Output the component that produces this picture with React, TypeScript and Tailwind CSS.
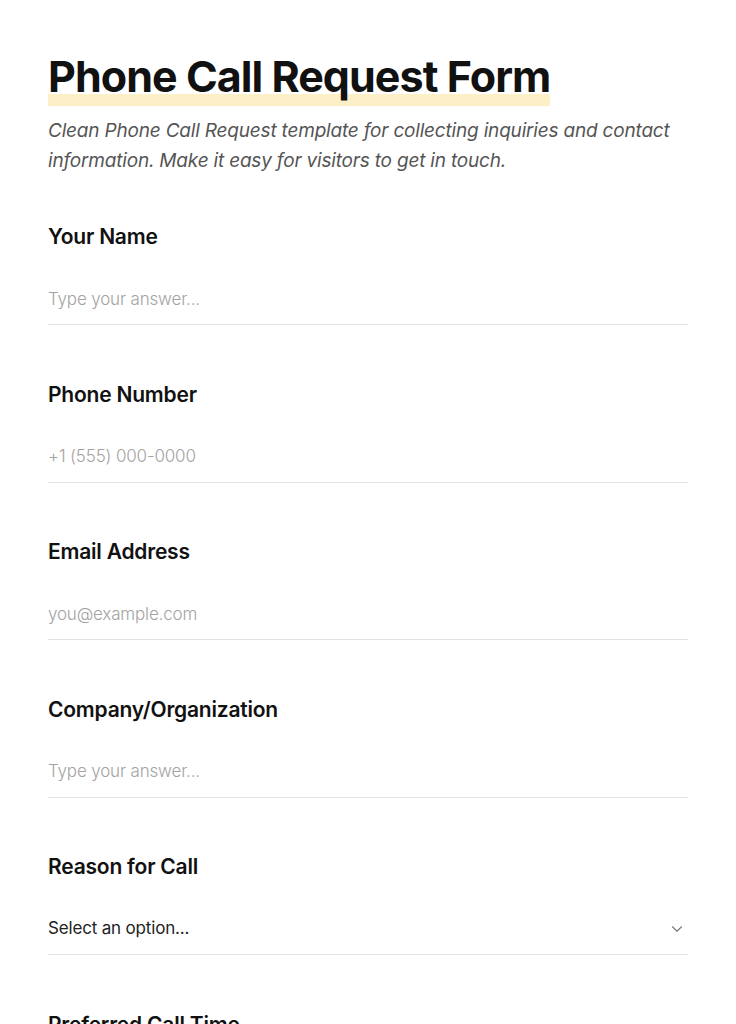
import { ChevronDown } from 'lucide-react'

const fields = [
  { label: 'Your Name', placeholder: 'Type your answer...' },
  { label: 'Phone Number', placeholder: '+1 (555) 000-0000' },
  { label: 'Email Address', placeholder: 'you@example.com' },
  { label: 'Company/Organization', placeholder: 'Type your answer...' },
]

export default function App() {
  return (
    <div className="min-h-screen bg-white px-12 pt-[51px] font-['Inter',sans-serif] text-[#111]">
      <h1 className="relative inline-block text-[43px] font-bold leading-[50px] tracking-[-0.022em]">
        <span className="absolute left-0 right-0 bottom-[-5px] h-[12px] bg-[#fdf0c7]" />
        <span className="relative">Phone Call Request Form</span>
      </h1>
      <p className="mt-[15px] text-[19px] italic leading-[30px] text-[#555] tracking-[-0.01em]">
        Clean Phone Call Request template for collecting inquiries and contact information. Make it easy for visitors to get in touch.
      </p>

      <div className="mt-[47px] flex flex-col gap-[55.5px]">
        {fields.map((f, i) => (
          <div key={i}>
            <label className="block text-[21px] font-semibold leading-[28px] tracking-[-0.01em]">{f.label}</label>
            <input
              className="mt-[22px] block h-[52px] w-full border-b-[1.5px] border-[#e2e2e2] bg-transparent text-[17px] font-light tracking-[-0.01em] outline-none placeholder:text-[#a3a3a3]"
              placeholder={f.placeholder}
            />
          </div>
        ))}
        <div>
          <label className="block text-[21px] font-semibold leading-[28px] tracking-[-0.01em]">Reason for Call</label>
          <div className="mt-[22px] flex h-[52px] items-center justify-between border-b-[1.5px] border-[#e2e2e2] text-[17px] tracking-[-0.01em] text-[#222]">
            <span>Select an option...</span>
            <ChevronDown className="mr-[2px] h-[18px] w-[18px] text-[#777]" strokeWidth={1.5} />
          </div>
        </div>
        <div>
          <label className="block text-[21px] font-semibold leading-[28px] tracking-[-0.01em]">Preferred Call Time</label>
        </div>
      </div>
    </div>
  )
}
